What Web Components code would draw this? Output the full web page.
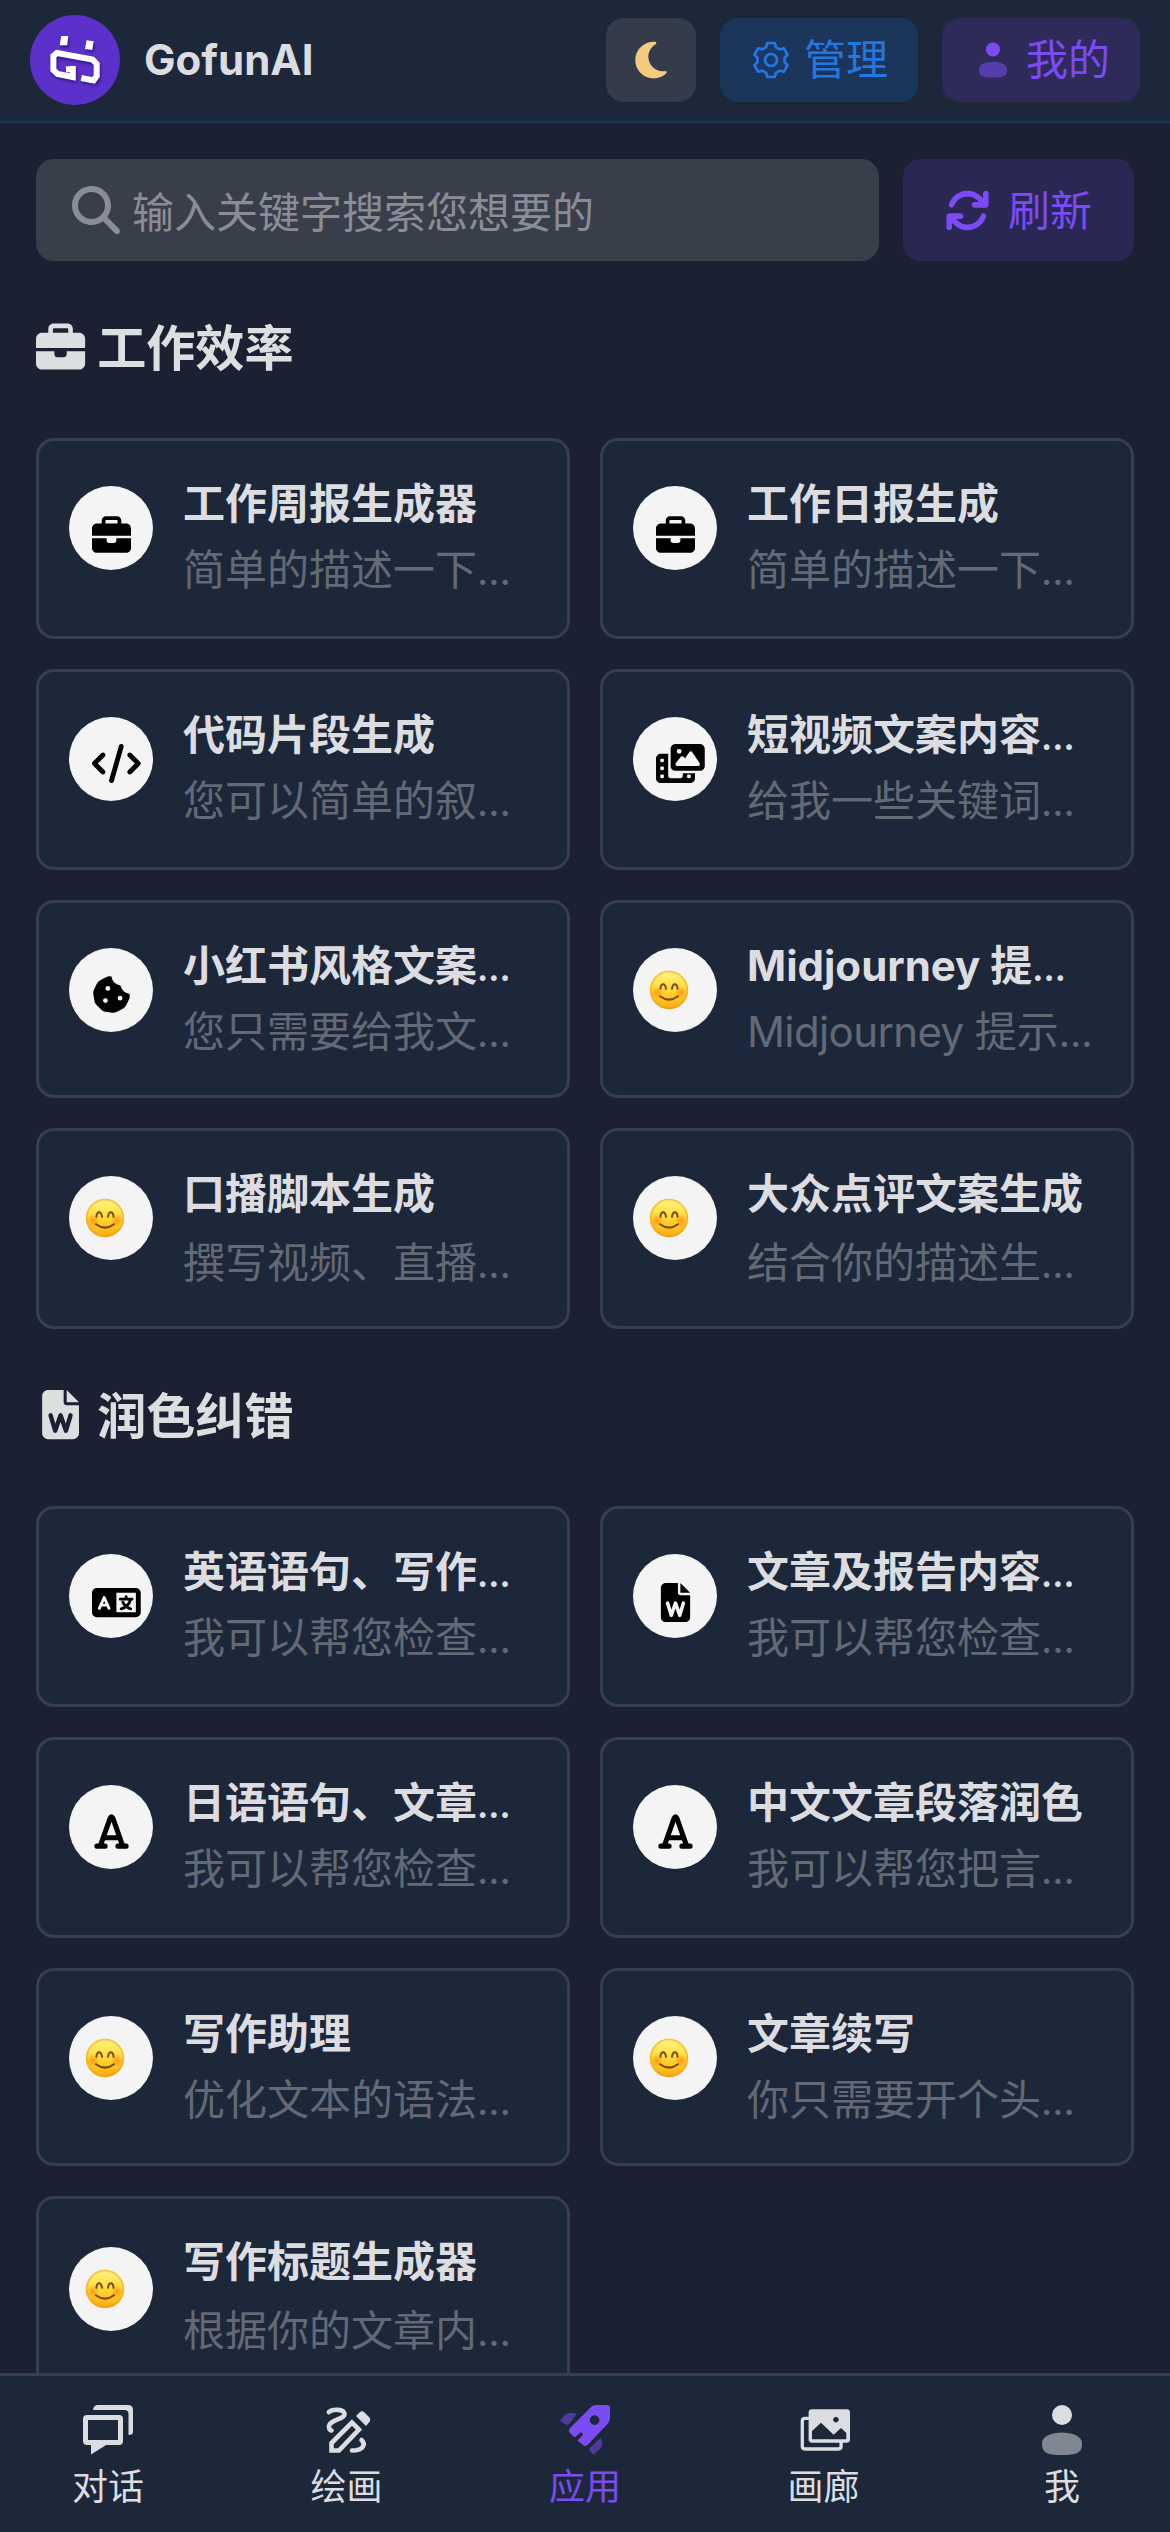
<!DOCTYPE html>
<html lang="zh-CN">
<head>
<meta charset="utf-8">
<title>GofunAI</title>
<style>
html,body{margin:0;height:100%;background:#1c2033}
body{font-family:Inter,"Noto Sans CJK SC",sans-serif;font-size:42px;color:#dcdde0;overflow:hidden}
</style>
</head>
<body>
<app-shell></app-shell>
<script>
// Outline of a six-toothed cog, centred in a 42px box.
const gearPath = (() => {
  const tooth = [[-4.9,-12.9],[-3.7,-17],[3.7,-17],[4.9,-12.9]];
  let d = '';
  for (let k = 0; k < 6; k++) {
    const a = k * Math.PI / 3, c = Math.cos(a), s = Math.sin(a);
    const p = tooth.map(([x, y]) => `${(21 + x*c - y*s).toFixed(2)} ${(21 + x*s + y*c).toFixed(2)}`);
    d += (k ? 'L' : 'M') + p.join('L');
  }
  return d + 'Z';
})();

const ICONS = {
  briefcase: ['0 -16 512 512', '<path d="M184 48H328c4.4 0 8 3.6 8 8V96H176V56c0-4.4 3.6-8 8-8zm-56 8V96H64C28.7 96 0 124.7 0 160v96H192 320 512V160c0-35.3-28.7-64-64-64H384V56c0-30.9-25.1-56-56-56H184c-30.9 0-56 25.1-56 56zM512 288H320v32c0 17.7-14.3 32-32 32H224c-17.7 0-32-14.3-32-32V288H0V416c0 35.3 28.7 64 64 64H448c35.3 0 64-28.7 64-64V288z"/>'],
  code: ['0 0 640 512', '<path d="M392.8 1.2c-17-4.9-34.7 5-39.6 22l-128 448c-4.9 17 5 34.7 22 39.6s34.7-5 39.6-22l128-448c4.9-17-5-34.7-22-39.6zm80.6 120.1c-12.5 12.5-12.5 32.8 0 45.3L562.7 256l-89.4 89.4c-12.5 12.5-12.5 32.8 0 45.3s32.8 12.5 45.3 0l112-112c12.5-12.5 12.5-32.8 0-45.3l-112-112c-12.5-12.5-32.8-12.5-45.3 0zm-306.7 0c-12.5-12.5-32.8-12.5-45.3 0l-112 112c-12.5 12.5-12.5 32.8 0 45.3l112 112c12.5 12.5 32.8 12.5 45.3 0s12.5-32.8 0-45.3L77.3 256l89.4-89.4c12.5-12.5 12.5-32.8 0-45.3z"/>'],
  film: ['0 0 640 512', '<path d="M256 0H576c35.3 0 64 28.7 64 64V288c0 35.3-28.7 64-64 64H256c-35.3 0-64-28.7-64-64V64c0-35.3 28.7-64 64-64zM476 106.7C471.5 100 464 96 456 96s-15.5 4-20 10.7l-56 84L362.7 169c-4.6-5.7-11.5-9-18.7-9s-14.2 3.3-18.7 9l-64 80c-5.8 7.2-6.9 17.1-2.9 25.4s12.4 13.6 21.6 13.6h80 48H552c8.9 0 17-4.9 21.2-12.7s3.7-17.3-1.2-24.6l-96-144zM336 96a32 32 0 1 0 -64 0 32 32 0 1 0 64 0zM64 128h96V384v32c0 17.7 14.3 32 32 32H320c17.7 0 32-14.3 32-32V384H512v64c0 35.3-28.7 64-64 64H64c-35.3 0-64-28.7-64-64V192c0-35.3 28.7-64 64-64zm8 64c-8.8 0-16 7.2-16 16v16c0 8.8 7.2 16 16 16H88c8.8 0 16-7.2 16-16V208c0-8.8-7.2-16-16-16H72zm0 104c-8.8 0-16 7.2-16 16v16c0 8.8 7.2 16 16 16H88c8.8 0 16-7.2 16-16V312c0-8.8-7.2-16-16-16H72zm0 104c-8.8 0-16 7.2-16 16v16c0 8.8 7.2 16 16 16H88c8.8 0 16-7.2 16-16V416c0-8.8-7.2-16-16-16H72zm336 16v16c0 8.8 7.2 16 16 16h16c8.8 0 16-7.2 16-16V416c0-8.8-7.2-16-16-16H424c-8.8 0-16 7.2-16 16z"/>'],
  cookie: ['0 0 512 512', '<path d="M257.5 27.6c-.8-5.4-4.9-9.8-10.3-10.6c-22.1-3.1-44.6 .9-64.4 11.4l-74 39.5C89.1 78.4 73.2 94.9 63.4 115L26.7 190.6c-9.8 20.1-13 42.9-9.1 64.9l14.5 82.8c3.9 22.1 14.6 42.3 30.7 57.9l60.3 58.4c16.1 15.6 36.6 25.6 58.7 28.7l83 11.7c22.1 3.1 44.6-.9 64.4-11.4l74-39.5c19.7-10.5 35.6-27 45.4-47.2l36.7-75.5c9.8-20.1 13-42.9 9.1-64.9c-.9-5.3-5.3-9.3-10.6-10.1c-51.5-8.2-92.8-47.1-104.5-97.4c-1.8-7.6-8-13.4-15.7-14.6c-54.6-8.7-97.7-52-106.2-106.8zM208 144a32 32 0 1 1 0 64 32 32 0 1 1 0-64zM144 336a32 32 0 1 1 64 0 32 32 0 1 1 -64 0zm224-64a32 32 0 1 1 0 64 32 32 0 1 1 0-64z"/>'],
  word: ['-64 0 512 512', '<path d="M64 0C28.7 0 0 28.7 0 64V448c0 35.3 28.7 64 64 64H320c35.3 0 64-28.7 64-64V160H256c-17.7 0-32-14.3-32-32V0H64zM256 0V128H384L256 0z"/><path d="M88 264 136 424 192 264 248 424 296 264" fill="none" stroke="var(--hole,#f4f4f4)" stroke-width="46" stroke-linecap="round" stroke-linejoin="round"/>'],
  language: ['0 0 640 512', '<path fill-rule="evenodd" d="M64 64H576c35 0 64 29 64 64V384c0 35-29 64-64 64H64c-35 0-64-29-64-64V128C0 93 29 64 64 64zM320 128V384H576V128z"/><path d="M96 332 160 190 224 332M120 290H200" fill="none" stroke="var(--hole,#f4f4f4)" stroke-width="38" stroke-linecap="round" stroke-linejoin="round"/><path d="M370 212H526M448 180V206M506 216C490 280 440 326 384 340M404 252C424 296 462 326 508 340" fill="none" stroke="currentColor" stroke-width="37" stroke-linecap="round"/>'],
  font: ['-32 0 512 512', '<path d="M76 448 206 80q18-34 36 0L372 448M130 338H318M32 448H140M308 448H416" fill="none" stroke="currentColor" stroke-width="66" stroke-linecap="round" stroke-linejoin="round"/>'],
  search: ['0 0 512 512', '<path d="M416 208c0 45.9-14.9 88.3-40 122.7L502.6 457.4c12.5 12.5 12.5 32.8 0 45.3s-32.8 12.5-45.3 0L330.7 376c-34.4 25.2-76.8 40-122.7 40C93.1 416 0 322.9 0 208S93.1 0 208 0S416 93.1 416 208zM208 352a144 144 0 1 0 0-288 144 144 0 1 0 0 288z"/>'],
  rotate: ['0 0 512 512', '<path d="M105.1 202.6c7.7-21.8 20.2-42.3 37.8-59.8c62.5-62.5 163.8-62.5 226.3 0L386.3 160H336c-17.7 0-32 14.3-32 32s14.3 32 32 32H463.9c17.7 0 32-14.3 32-32V64c0-17.7-14.3-32-32-32s-32 14.3-32 32v51.2L414.4 97.6c-87.5-87.5-229.3-87.5-316.8 0C73.2 122 55.6 150.7 44.8 181.4c-5.9 16.7 2.9 34.9 19.5 40.8s34.9-2.9 40.8-19.5zM39 289.3c-5 1.5-9.8 4.2-13.7 8.2c-4 4-6.7 8.8-8.1 14c-.3 1.2-.6 2.5-.8 3.8c-.3 1.7-.4 3.4-.4 5.1V448c0 17.7 14.3 32 32 32s32-14.3 32-32V396.9l17.6 17.5c87.5 87.4 229.3 87.4 316.7 0c24.4-24.4 42.1-53.1 52.9-83.7c5.9-16.7-2.9-34.9-19.5-40.8s-34.9 2.9-40.8 19.5c-7.7 21.8-20.2 42.3-37.8 59.8c-62.5 62.5-163.8 62.5-226.3 0l-.1-.1L125.6 352H176c17.7 0 32-14.3 32-32s-14.3-32-32-32H48.4c-1.6 0-3.2 .1-4.8 .3s-3.1 .5-4.6 1z"/>'],
  moon: ['-64 0 512 512', '<path d="M223.5 32C100 32 0 132.3 0 256S100 480 223.5 480c60.6 0 115.5-24.2 155.8-63.4c5-4.9 6.3-12.5 3.1-18.7s-10.1-9.7-17-8.5c-9.8 1.7-19.8 2.6-30.1 2.6c-96.9 0-175.5-78.8-175.5-176c0-65.8 36-123.1 89.3-153.3c6.1-3.5 9.2-10.5 7.7-17.3s-7.3-11.9-14.3-12.5c-6.3-.5-12.6-.8-19-.8z"/>'],
  gear: ['0 0 42 42', `<path d="${gearPath}" fill="currentColor" fill-opacity=".08" stroke="currentColor" stroke-width="2.7" stroke-linejoin="round"/><circle cx="21" cy="21" r="6" fill="none" stroke="currentColor" stroke-width="2.7"/>`],
  person: ['0 0 42 42', '<circle cx="21" cy="10.500" r="7"/><path opacity=".53" d="M7 31C7 25.500 13 22.800 21 22.800S35 25.500 35 31C35 37.500 31 38.500 21 38.500S7 37.500 7 31z"/>'],
  user: ['0 0 48 48', '<circle cx="24" cy="10" r="10"/><path opacity=".53" d="M4 38.500C4 31 14 27.500 24 27.500S44 31 44 38.500C44 48 39 50 24 50S4 48 4 38.500z"/>'],
  chat: ['0 0 48 48', '<rect x="1.500" y="12.500" width="35" height="25" rx="1.500" fill="none" stroke="currentColor" stroke-width="5"/><path d="M7 36V49.500L23 39.500V36zM9 5Q9.500 0 14 0H44q5 0 5 5V27q0 3-4.500 3V9q0-4-4-4z"/>'],
  draw: ['0 0 48 48', '<g fill="none" stroke="currentColor" stroke-width="4.600"><path stroke-linecap="round" d="M5.800 7.200C9 4 21 3.500 21.500 9C22 14 6 15 6 21.500C6 24 6.500 25 8.500 25.500"/><path d="M8.500 45.500V38L29 17.500 36 24.500 16 45.500z"/><path stroke-linecap="round" d="M38.500 35C42.500 38.500 41.500 45.500 29 45.500"/></g><path d="M33 11l3.500-3.500q2.500-2.500 5 0l4.500 4.500q2.500 2.500 0 5.500L43 21z"/>'],
  rocket: ['0 0 48 48', '<path fill-rule="evenodd" d="M35 0H46q3 0 3 3V14q0 2.500-2 4.500L27 39.500q-2.500 2.500-5 .500L16.500 35.500 21.500 30.500Q22.500 27.500 19.500 27.500L13.500 32.500 9 28Q7 25.500 9 23L30 2Q32 0 35 0zM33.600 10.300a4.800 4.800 0 1 0 .01 0z"/><path opacity=".53" d="M-1.300 15.700 4.500 9.500Q9 6.500 15.700 9L6.700 20.700zM39.700 32.700Q43 39.500 39.500 43L32.500 50 27.700 44.300z"/>'],
  gallery: ['0 0 48 48', '<path fill-rule="evenodd" d="M12 4.300H46.600q3.400 0 3.400 3.400V34.300q0 3.400-3.400 3.400H12q-3.400 0-3.400-3.400V7.700q0-3.400 3.400-3.400zM12 26V34.300H46.300V28L41 23 33.600 29.700 21 17.700zM35.900 11.900a2.800 2.800 0 1 0 .01 0z"/><path d="M9 13.300H5q-2.700 0-2.700 2.700V41.300q0 2.700 2.700 2.700H38.500q2.600 0 2.600-2.700V37" fill="none" stroke="currentColor" stroke-width="3.300"/>'],
  smile: ['0 0 38 38', '<defs><linearGradient id="f" x1="0" y1="0" x2="0" y2="1"><stop offset="0" stop-color="#fff685"/><stop offset=".5" stop-color="#ffd935"/><stop offset="1" stop-color="#f9a80f"/></linearGradient><radialGradient id="e"><stop offset=".85" stop-color="#f19a10" stop-opacity="0"/><stop offset="1" stop-color="#ee9210" stop-opacity=".65"/></radialGradient><radialGradient id="c"><stop offset="0" stop-color="#fb8410" stop-opacity=".75"/><stop offset="1" stop-color="#fb8a10" stop-opacity="0"/></radialGradient></defs><circle cx="19" cy="19" r="19.200" fill="url(#f)"/><circle cx="19" cy="19" r="19.200" fill="url(#e)"/><circle cx="7" cy="21.500" r="6.500" fill="url(#c)"/><circle cx="31" cy="21.500" r="6.500" fill="url(#c)"/><g fill="none" stroke="#7c4a08" stroke-width="2" stroke-linecap="round"><path d="M10.400 17.800C11 11.600 15.200 11.600 16 17.800M22 17.800C22.800 11.600 27 11.600 27.600 17.800"/><path d="M10 25.200Q19 32 28 25.200"/></g>'],
  logo: ['0 0 90 90', '<circle cx="45" cy="45" r="45" fill="#5c30cb"/><g style="filter:drop-shadow(1px 2px 1.500px rgba(20,0,70,.55))"><path fill="#fff" d="M31.200 21H38.300L37.200 30.300H29.700zM56.600 25.300 63.700 26.300 62.200 35 55 34z"/><path fill="none" stroke="#fff" stroke-width="6" d="M36 54.500 42.800 54M42.800 51V62L27.500 59 23.400 55V41L27 38 62.500 44.500 66.700 49V61L63.500 65.500 51.300 63"/></g>']
};

class UiIcon extends HTMLElement {
  connectedCallback() {
    const [box, body] = ICONS[this.getAttribute('name')];
    const [, , w, h] = box.split(' ').map(Number);
    this.attachShadow({mode: 'open'}).innerHTML = `
      <style>:host{display:block;flex:none;width:1em;height:1em}
      svg{display:block;height:1em;width:${w / h}em;overflow:visible;fill:currentColor}</style>
      <svg viewBox="${box}" aria-hidden="true">${body}</svg>`;
  }
}
customElements.define('ui-icon', UiIcon);

class SoftButton extends HTMLElement {
  connectedCallback() {
    this.attachShadow({mode: 'open'}).innerHTML = `
      <style>:host{display:flex;flex:none;align-items:center;justify-content:center;box-sizing:border-box;border-radius:18px;
        height:var(--h,84px);padding:0 var(--pad,30px);gap:var(--gap,12px);background:var(--bg);color:var(--fg);white-space:nowrap;line-height:60px}
      ui-icon{font-size:var(--icon,42px)}</style>
      <ui-icon name="${this.getAttribute('icon')}"></ui-icon><slot></slot>`;
  }
}
customElements.define('soft-button', SoftButton);

class AppHeader extends HTMLElement {
  connectedCallback() {
    this.attachShadow({mode: 'open'}).innerHTML = `
      <style>:host{display:flex;flex:none;box-sizing:border-box;height:123px;border-bottom:3px solid #1f334d;background:#1d273a;
        padding:0 30px;align-items:center;gap:24px}
      .logo{font-size:90px}
      h1{margin:0;font-size:42px;font-weight:700;line-height:60px;flex:1}
      .theme{--bg:#343c4b;--fg:#f4ca7e;--pad:24px}
      .admin{--bg:#1c355a;--fg:#2277e2}
      .mine{--bg:#2e2b5b;--fg:#7b4bf3}</style>
      <ui-icon class="logo" name="logo"></ui-icon><h1>GofunAI</h1>
      <soft-button class="theme" icon="moon"></soft-button>
      <soft-button class="admin" icon="gear">管理</soft-button>
      <soft-button class="mine" icon="person">我的</soft-button>`;
  }
}
customElements.define('app-header', AppHeader);

class SearchBar extends HTMLElement {
  connectedCallback() {
    this.attachShadow({mode: 'open'}).innerHTML = `
      <style>:host{display:flex;gap:24px;height:102px}
      .field{flex:1;display:flex;align-items:center;gap:12px;padding:0 36px;border-radius:18px;background:#393e4b;color:#8b8d96}
      .field ui-icon{font-size:48px}
      .field span{line-height:60px;padding-top:6px}
      soft-button{--h:102px;--pad:42px;--gap:18px;--icon:45px;--bg:#2a2755;--fg:#7b4bf3}
      soft-button span{padding-top:1px}</style>
      <div class="field"><ui-icon name="search"></ui-icon><span>输入关键字搜索您想要的</span></div>
      <soft-button icon="rotate"><span>刷新</span></soft-button>`;
  }
}
customElements.define('search-bar', SearchBar);

class AppCard extends HTMLElement {
  connectedCallback() {
    const icon = this.getAttribute('icon');
    const emoji = icon === 'smile';
    this.attachShadow({mode: 'open'}).innerHTML = `
      <style>:host{display:flex;box-sizing:border-box;border:3px solid #353f4f;border-radius:18px;background:#1d273a;
        padding:30px 30px 0;gap:30px;min-width:0}
      .disc{flex:none;display:flex;align-items:center;box-sizing:border-box;width:84px;height:84px;border-radius:50%;background:#f4f4f4;color:#000;
        margin-top:${15 + +(this.getAttribute('drop') || 0)}px;padding-left:${emoji ? 17 : 22.5}px;
        padding-top:${emoji ? 0 : (+this.getAttribute('dy') || 9)}px}
      ui-icon{font-size:${emoji ? 38 : 39}px}
      .text{min-width:0;white-space:nowrap}
      ::slotted(*){display:block;line-height:66px}
      ::slotted([slot=title]){font-weight:700}
      ::slotted([slot=desc]){color:#636975;margin-top:${this.getAttribute('drop') || this.getAttribute('gap') || 0}px}</style>
      <div class="disc"><ui-icon name="${icon}"></ui-icon></div>
      <div class="text"><slot name="title"></slot><slot name="desc"></slot></div>`;
  }
}
customElements.define('app-card', AppCard);

class AppSection extends HTMLElement {
  connectedCallback() {
    this.attachShadow({mode: 'open'}).innerHTML = `
      <style>:host{display:block}
      header{display:flex;align-items:center;gap:12px;height:72px;font-size:49.14px;font-weight:700;--hole:#1c2033;color:#dcdfe0}
      h2{margin:0;padding-top:3px;font-size:inherit;line-height:69px}
      .grid{display:grid;grid-template-columns:1fr 1fr;grid-template-rows:201px 201px 198px 201px;gap:30px;margin-top:55px}</style>
      <header><ui-icon name="${this.getAttribute('icon')}"></ui-icon><h2>${this.getAttribute('heading')}</h2></header>
      <div class="grid"><slot></slot></div>`;
  }
}
customElements.define('app-section', AppSection);

class NavItem extends HTMLElement {
  connectedCallback() {
    this.attachShadow({mode: 'open'}).innerHTML = `
      <style>:host{display:flex;flex-direction:column;align-items:center;width:72px;font-size:36px;line-height:48px;white-space:nowrap}
      :host([active]){color:#7b4bf3}
      ui-icon{font-size:48px;margin-bottom:10px}</style>
      <ui-icon name="${this.getAttribute('icon')}"></ui-icon><slot></slot>`;
  }
}
customElements.define('nav-item', NavItem);

class TabBar extends HTMLElement {
  connectedCallback() {
    this.attachShadow({mode: 'open'}).innerHTML = `
      <style>:host{display:flex;flex:none;justify-content:space-between;box-sizing:border-box;height:159px;border-top:3px solid #353f4f;
        background:#1d273a;padding:29px 72px 0}</style><slot></slot>`;
  }
}
customElements.define('tab-bar', TabBar);

// Narrower ellipsis that leaves the line box alone, and a slightly tighter Latin word in descriptions.
const cut = (text, size) => text.replace('…', `<span style="font-size:${size}em;line-height:0">…</span>`);
const tight = text => text.replace('Midjourney ', '<span style="letter-spacing:-.6px">Midjourney </span>');
const card = ([icon, title, desc, extra = '']) =>
  `<app-card icon="${icon}" ${extra}><span slot="title">${cut(title, .8)}</span><span slot="desc">${tight(cut(desc, .93))}</span></app-card>`;
const WORK = [
  ['briefcase', '工作周报生成器', '简单的描述一下…', 'dy="13"'],
  ['briefcase', '工作日报生成', '简单的描述一下…', 'dy="13"'],
  ['code', '代码片段生成', '您可以简单的叙…'],
  ['film', '短视频文案内容…', '给我一些关键词…'],
  ['cookie', '小红书风格文案…', '您只需要给我文…'],
  ['smile', 'Midjourney 提…', 'Midjourney 提示…'],
  ['smile', '口播脚本生成', '撰写视频、直播…', 'gap="3"'],
  ['smile', '大众点评文案生成', '结合你的描述生…', 'gap="3"']
];
const POLISH = [
  ['language', '英语语句、写作…', '我可以帮您检查…', 'dy="13"'],
  ['word', '文章及报告内容…', '我可以帮您检查…', 'dy="13"'],
  ['font', '日语语句、文章…', '我可以帮您检查…'],
  ['font', '中文文章段落润色', '我可以帮您把言…'],
  ['smile', '写作助理', '优化文本的语法…'],
  ['smile', '文章续写', '你只需要开个头…'],
  ['smile', '写作标题生成器', '根据你的文章内…', 'drop="3"']
];

class AppShell extends HTMLElement {
  connectedCallback() {
    this.attachShadow({mode: 'open'}).innerHTML = `
      <style>:host{display:flex;flex-direction:column;height:2532px;width:1170px;background:#1c2033}
      main{flex:1;min-height:0;overflow:hidden;padding:36px 36px 0}
      app-section{margin-top:50px}</style>
      <app-header></app-header>
      <main>
        <search-bar></search-bar>
        <app-section icon="briefcase" heading="工作效率">${WORK.map(card).join('')}</app-section>
        <app-section icon="word" heading="润色纠错">${POLISH.map(card).join('')}</app-section>
      </main>
      <tab-bar>
        <nav-item icon="chat">对话</nav-item>
        <nav-item icon="draw">绘画</nav-item>
        <nav-item icon="rocket" active>应用</nav-item>
        <nav-item icon="gallery">画廊</nav-item>
        <nav-item icon="user">我</nav-item>
      </tab-bar>`;
  }
}
customElements.define('app-shell', AppShell);
</script>
</body>
</html>
